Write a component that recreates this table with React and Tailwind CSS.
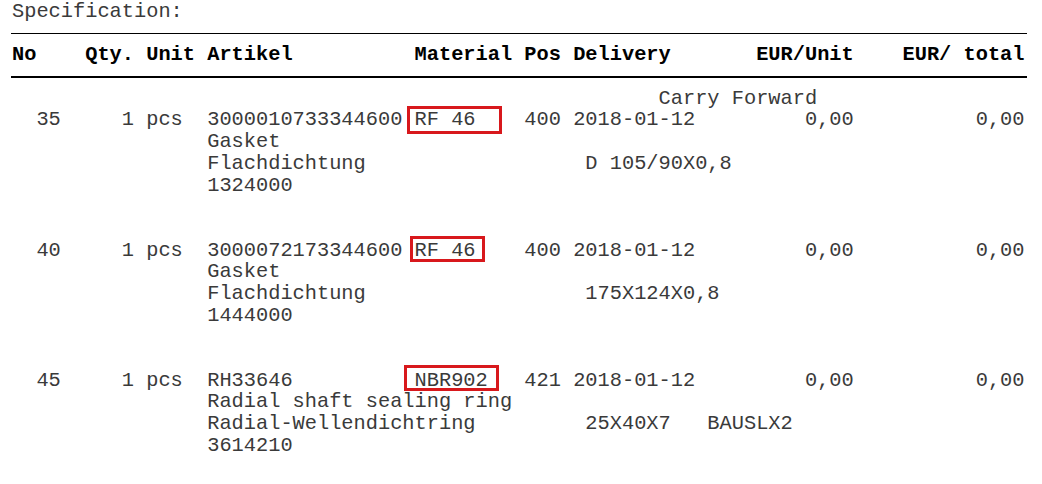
import React from "react";

// place each text at its character column, like a fixed-width print
const at = (...parts) => {
    let line = "";
    parts.forEach(([col, text]) => {
        line = line.padEnd(col, " ") + text;
    });
    return line;
};

const header = at(
    [0, "No"], [6, "Qty."], [11, "Unit"], [16, "Artikel"], [33, "Material"],
    [42, "Pos"], [46, "Delivery"], [61, "EUR/Unit"], [73, "EUR/ total"]
);

const body = [
    at([53, "Carry Forward"]),
    at([2, "35"], [9, "1"], [11, "pcs"], [16, "3000010733344600"], [33, "RF 46"], [42, "400"], [46, "2018-01-12"], [65, "0,00"], [79, "0,00"]),
    at([16, "Gasket"]),
    at([16, "Flachdichtung"], [47, "D 105/90X0,8"]),
    at([16, "1324000"]),
    "",
    "",
    at([2, "40"], [9, "1"], [11, "pcs"], [16, "3000072173344600"], [33, "RF 46"], [42, "400"], [46, "2018-01-12"], [65, "0,00"], [79, "0,00"]),
    at([16, "Gasket"]),
    at([16, "Flachdichtung"], [47, "175X124X0,8"]),
    at([16, "1444000"]),
    "",
    "",
    at([2, "45"], [9, "1"], [11, "pcs"], [16, "RH33646"], [33, "NBR902"], [42, "421"], [46, "2018-01-12"], [65, "0,00"], [79, "0,00"]),
    at([16, "Radial shaft sealing ring"]),
    at([16, "Radial-Wellendichtring"], [47, "25X40X7"], [57, "BAUSLX2"]),
    at([16, "3614210"]),
];

function Rule() {
    return (
        <div className="h-[21.7px] flex items-center -ml-px">
            <div className="w-[1016px] h-[1.5px] bg-black" />
        </div>
    );
}

function Line({ text, bold }) {
    return (
        <div className={`h-[21.7px] whitespace-pre ${bold ? "font-bold text-black" : "text-[#3a3a3a]"}`}>
            {text || " "}
        </div>
    );
}

export default function App() {
    return (
        <div className="relative w-[1042px] h-[484px] bg-white overflow-hidden">
            <div className="pl-[12px] pt-px font-['Liberation_Mono',monospace] text-[20.33px] leading-[21.7px]">
                <Line text="Specification:" />
                <Rule />
                <Line text={header} bold />
                <Rule />
                {body.map((text, i) => (
                    <Line key={i} text={text} />
                ))}
            </div>

            {/* red markers round the material codes */}
            <div className="absolute left-[407px] top-[106px] w-[95px] h-[28px] border-[3px] border-[#d8181c]" />
            <div className="absolute left-[410px] top-[236px] w-[75px] h-[26px] border-[3px] border-[#d8181c]" />
            <div className="absolute left-[404px] top-[365px] w-[95px] h-[26px] border-[3px] border-[#d8181c]" />
        </div>
    );
}
